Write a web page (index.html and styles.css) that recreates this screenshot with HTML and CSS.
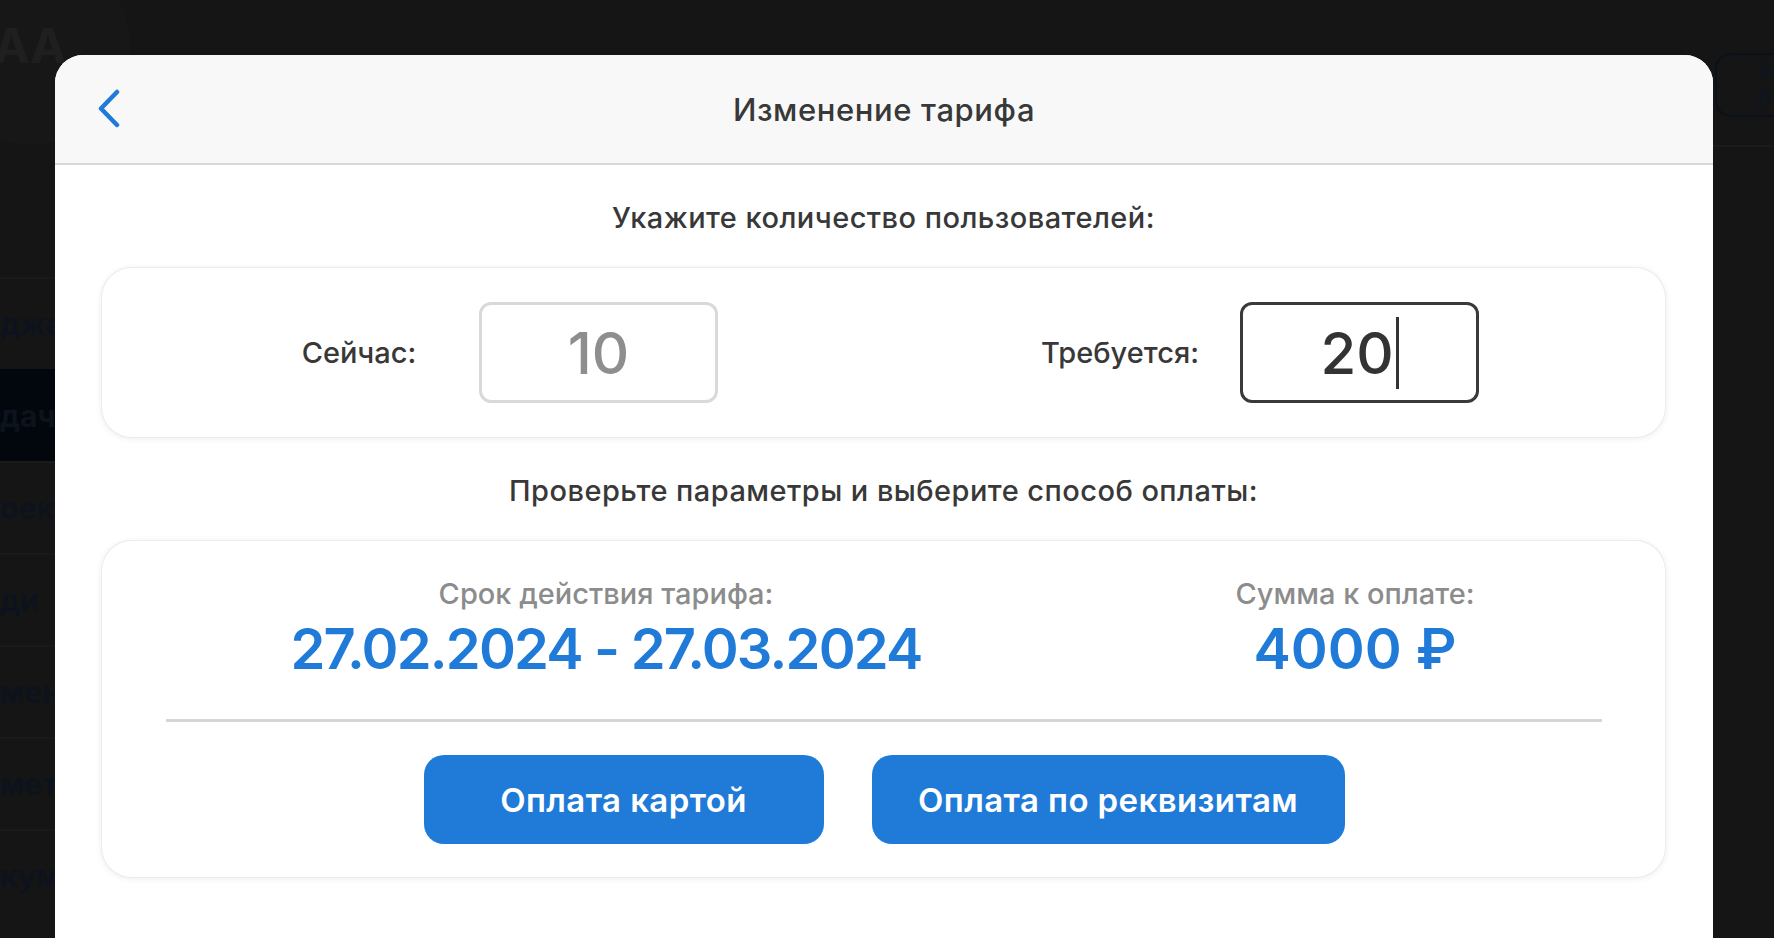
FILE: index.html
```html
<!DOCTYPE html>
<html lang="ru">
<head>
    <meta charset="UTF-8">
    <meta name="viewport" content="width=device-width, initial-scale=1.0">
    <title>Изменение тарифа</title>
    <link rel="stylesheet" href="styles.css">
</head>
<body>
    <div class="page">
        <aside class="sidebar">
            <div class="sidebar-top">
                <div class="avatar">АА</div>
            </div>
            <div class="side-item">джеты</div>
            <div class="side-item active">дачи</div>
            <div class="side-item">оекты</div>
            <div class="side-item">ди</div>
            <div class="side-item">менд</div>
            <div class="side-item">метки</div>
            <div class="side-item">кументы</div>
        </aside>
        <main class="main">
            <div class="main-header">
                <div class="quota">За<br>0</div>
            </div>
        </main>
    </div>

    <!-- Tariff change dialog -->
    <div class="modal">
        <div class="modal-header">
            <a href="#" class="back">
                <svg width="24" height="40" viewBox="0 0 24 40">
                    <path d="M20 3 L4 19.5 L20 36" fill="none" stroke="#1f7ad8" stroke-width="4.5" stroke-linecap="round" stroke-linejoin="round"/>
                </svg>
            </a>
            <h1>Изменение тарифа</h1>
            <span></span>
        </div>

        <div class="modal-body">
            <p class="section-title">Укажите количество пользователей:</p>
            <div class="panel users">
                <div class="field">
                    <span class="field-label">Сейчас:</span>
                    <div class="count count-current">10</div>
                </div>
                <div class="field">
                    <span class="field-label">Требуется:</span>
                    <div class="count count-new">20<span class="caret"></span></div>
                </div>
            </div>

            <p class="section-title">Проверьте параметры и выберите способ оплаты:</p>
            <div class="panel summary">
                <div class="summary-row">
                    <div class="summary-item period">
                        <div class="summary-label">Срок действия тарифа:</div>
                        <div class="summary-value">27.02.2024 - 27.03.2024</div>
                    </div>
                    <div class="summary-item total">
                        <div class="summary-label">Сумма к оплате:</div>
                        <div class="summary-value">4000 ₽</div>
                    </div>
                </div>
                <div class="divider"></div>
                <div class="pay-buttons">
                    <button class="pay pay-card">Оплата картой</button>
                    <button class="pay pay-invoice">Оплата по реквизитам</button>
                </div>
            </div>
        </div>
    </div>
</body>
</html>
```

FILE: styles.css
```css
body {
    margin: 0;
    background: #151515;
    font-family: "Inter", "Noto Sans", sans-serif;
    height: 100vh;
    overflow: hidden;
}

/* Dimmed page behind the dialog */
.page {
    display: flex;
    height: 100vh;
}

.sidebar {
    width: 223px;
    flex-shrink: 0;
    overflow: hidden;
}

.sidebar-top {
    height: 277px;
    position: relative;
    overflow: hidden;
}

.avatar {
    position: absolute;
    left: -70px;
    top: -55px;
    width: 200px;
    height: 200px;
    border-radius: 50%;
    background: #171717;
    color: #1f1f1f;
    font-size: 48px;
    font-weight: 700;
    display: flex;
    align-items: center;
    justify-content: center;
}

.side-item {
    height: 90px;
    border-top: 2px solid #1a1a1a;
    display: flex;
    align-items: center;
    font-size: 30px;
    font-weight: 700;
    color: #0d131c;
    white-space: nowrap;
}

.side-item.active {
    background: #02070d;
    border-top-color: #02070d;
}

.main {
    flex: 1;
}

.main-header {
    height: 145px;
    border-bottom: 2px solid #1b1b1b;
    display: flex;
    justify-content: flex-end;
    align-items: flex-start;
    overflow: hidden;
}

.quota {
    margin-top: 53px;
    width: 130px;
    height: 64px;
    margin-right: -71px;
    border: 2px solid #0a111b;
    border-radius: 16px;
    color: #0d1521;
    font-size: 20px;
    font-weight: 700;
    line-height: 30px;
    padding-left: 40px;
    box-sizing: border-box;
}

/* Dialog */
.modal {
    position: absolute;
    left: 55px;
    top: 55px;
    width: 1658px;
    bottom: -40px;
    background: #fff;
    border-radius: 28px 28px 0 0;
    overflow: hidden;
}

.modal-header {
    height: 108px;
    background: #f8f8f8;
    border-bottom: 2px solid #d9d9d9;
    display: grid;
    grid-template-columns: 1fr auto 1fr;
    align-items: center;
    padding-left: 42px;
}

.back {
    display: flex;
    width: 24px;
}

.modal-header h1 {
    margin: 0;
    font-size: 31px;
    letter-spacing: 0.6px;
    font-weight: 500;
    color: #383838;
    padding-right: 42px;
}

.modal-body {
    padding: 33px 48px 0 47px;
}

.section-title {
    margin: 0 0 30px;
    text-align: center;
    font-size: 29px;
    letter-spacing: 0.45px;
    line-height: 40px;
    font-weight: 500;
    color: #383838;
}

.panel {
    background: #fff;
    border-radius: 30px;
    box-shadow: 0 0 0 1px #e9ecf0, 0 1px 6px rgba(40, 60, 90, 0.12);
    margin-bottom: 34px;
}

/* Users count */
.users {
    height: 169px;
    display: flex;
    align-items: center;
    padding-left: 157px;
    gap: 302px;
    box-sizing: border-box;
}

.field {
    display: flex;
    align-items: center;
    gap: 20px;
}

.field-label {
    width: 200px;
    text-align: center;
    font-size: 29px;
    font-weight: 500;
    color: #383838;
}

.count {
    width: 239px;
    height: 101px;
    box-sizing: border-box;
    border: 3px solid #d9d9d9;
    border-radius: 12px;
    display: flex;
    align-items: center;
    justify-content: center;
    font-size: 58px;
    font-weight: 500;
    color: #8e8e8e;
}

.count-new {
    border-color: #3a3a3a;
    color: #333;
}

.caret {
    display: inline-block;
    width: 3px;
    height: 72px;
    background: #333;
    margin-left: 2px;
}

/* Summary */
.summary {
    padding: 34px 63px 33px 64px;
}

.summary-row {
    display: flex;
    justify-content: space-between;
    padding: 0 97px 0 90px;
}

.summary-item {
    text-align: center;
}

.period {
    width: 700px;
}

.total {
    width: 300px;
}

.summary-label {
    font-size: 29px;
    line-height: 38px;
    font-weight: 500;
    color: #8c8c8c;
}

.summary-value {
    font-size: 56px;
    line-height: 72px;
    font-weight: 600;
    color: #1f7ad8;
}

.period .summary-value {
    letter-spacing: -1.8px;
}

.divider {
    height: 3px;
    background: #d6d6d6;
    margin: 34px 0 33px;
}

.pay-buttons {
    display: flex;
    justify-content: center;
    gap: 48px;
}

.pay {
    height: 89px;
    border: none;
    border-radius: 20px;
    background: #1f7ad8;
    color: #fff;
    font-family: "Inter", "Noto Sans", sans-serif;
    font-size: 33px;
    letter-spacing: 0.4px;
    font-weight: 600;
    cursor: pointer;
}

.pay-card {
    width: 400px;
}

.pay-invoice {
    width: 473px;
}
```
